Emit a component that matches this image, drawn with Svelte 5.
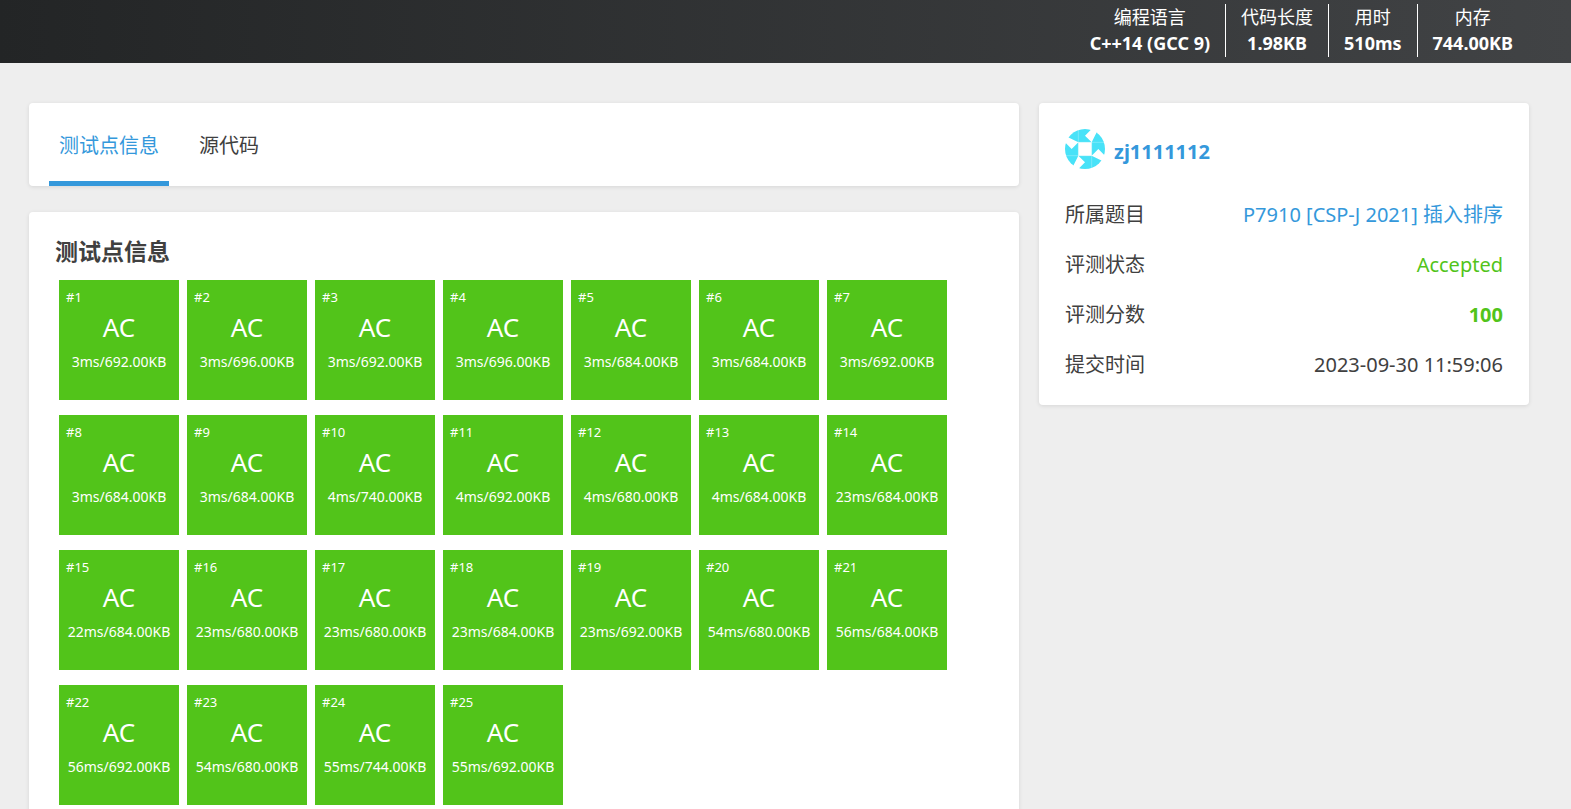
<script lang="ts">
	type Stat = { label: string; value: string };
	type TestCase = { id: number; time: string; memory: string };

	const stats: Stat[] = [
		{ label: "编程语言", value: "C++14 (GCC 9)" },
		{ label: "代码长度", value: "1.98KB" },
		{ label: "用时", value: "510ms" },
		{ label: "内存", value: "744.00KB" },
	];

	const tabs = ["测试点信息", "源代码"];
	let current = $state(0);

	const results: [number, number][] = [
		[3, 692], [3, 696], [3, 692], [3, 696], [3, 684], [3, 684], [3, 692],
		[3, 684], [3, 684], [4, 740], [4, 692], [4, 680], [4, 684], [23, 684],
		[22, 684], [23, 680], [23, 680], [23, 684], [23, 692], [54, 680], [56, 684],
		[56, 692], [54, 680], [55, 744], [55, 692],
	];

	const cases: TestCase[] = results.map(([time, memory], i) => ({
		id: i + 1,
		time: `${time}ms`,
		memory: `${memory.toFixed(2)}KB`,
	}));
</script>

<header>
	{#each stats as stat}
		<div class="stat">
			<span>{stat.label}</span>
			<strong>{stat.value}</strong>
		</div>
	{/each}
</header>

<div class="page">
	<main>
		<nav class="card tabs">
			{#each tabs as tab, i}
				<button class:active={current === i} onclick={() => (current = i)}>{tab}</button>
			{/each}
		</nav>

		<section class="card cases">
			<h2>测试点信息</h2>
			<div class="grid">
				{#each cases as item (item.id)}
					<div class="case">
						<div class="id">#{item.id}</div>
						<div class="status">AC</div>
						<div class="usage">{item.time}/{item.memory}</div>
					</div>
				{/each}
			</div>
		</section>
	</main>

	<aside class="card">
		<a class="user" href="#user">
			<svg viewBox="0 0 60 60" aria-hidden="true">
				<defs>
					<clipPath id="round"><circle cx="30" cy="30" r="30" /></clipPath>
					<path id="blade" d="M0 0H40L30 10L40 20H20L0 10Z" />
				</defs>
				<g clip-path="url(#round)" fill="#48e2f8">
					<use href="#blade" />
					<use href="#blade" transform="rotate(90 30 30)" />
					<use href="#blade" transform="rotate(180 30 30)" />
					<use href="#blade" transform="rotate(270 30 30)" />
				</g>
				<path d="M20 0V60M40 0V60M0 20H60M0 40H60" stroke="#fff" stroke-opacity="0.4" />
			</svg>
			<strong>zj1111112</strong>
		</a>
		<dl>
			<div>
				<dt>所属题目</dt>
				<dd><a href="#problem">P7910 [CSP-J 2021] 插入排序</a></dd>
			</div>
			<div>
				<dt>评测状态</dt>
				<dd class="ok">Accepted</dd>
			</div>
			<div>
				<dt>评测分数</dt>
				<dd class="ok score">100</dd>
			</div>
			<div>
				<dt>提交时间</dt>
				<dd>2023-09-30 11:59:06</dd>
			</div>
		</dl>
	</aside>
</div>

<style>
	:global(body) {
		margin: 0;
		background: #eee;
		color: #404040;
		font: 20px/30px "Noto Sans", "Noto Sans CJK SC", sans-serif;
	}

	header {
		display: flex;
		justify-content: flex-end;
		padding: 4px 43px 6px 29px;
		background: linear-gradient(to right, #232526, #414345);
		color: #fff;
		font-size: 18px;
		line-height: 26px;
	}

	.stat {
		display: flex;
		flex-direction: column;
		align-items: center;
		padding: 0 15px 1px;
	}

	.stat + .stat {
		border-left: 1px solid #fff;
	}

	.page {
		display: flex;
		align-items: flex-start;
		gap: 20px;
		padding: 40px 42px 40px 29px;
	}

	main {
		flex: 1;
		min-width: 0;
	}

	.card {
		background: #fff;
		border-radius: 4px;
		box-shadow: 0 1px 4px rgba(0, 0, 0, 0.1);
	}

	.tabs {
		display: flex;
		gap: 20px;
		padding: 0 20px;
		margin-bottom: 26px;
	}

	.tabs button {
		padding: 28px 10px 20px;
		border: none;
		border-bottom: 5px solid transparent;
		background: none;
		color: inherit;
		font: inherit;
		cursor: pointer;
	}

	.tabs .active {
		border-color: #3498db;
		color: #3498db;
	}

	.cases {
		padding: 24px 26px 40px;
	}

	h2 {
		margin: 0 0 14px;
		font-size: 23px;
		line-height: 30px;
	}

	.grid {
		display: flex;
		flex-wrap: wrap;
		gap: 15px 8px;
		padding: 0 4px;
	}

	.case {
		box-sizing: border-box;
		width: 120px;
		height: 120px;
		padding: 7px;
		background: #52c41a;
		color: #fff;
		text-align: center;
	}

	.id {
		font-size: 13px;
		line-height: 20px;
		text-align: left;
	}

	.status {
		font-size: 26px;
		line-height: 40px;
	}

	.usage {
		margin: 0 -7px;
		font-size: 14px;
		line-height: 30px;
	}

	aside {
		box-sizing: border-box;
		width: calc(100% / 3 - 10px);
		padding: 26px 26px 15px;
	}

	a {
		color: #3498db;
		text-decoration: none;
	}

	.user {
		display: flex;
		align-items: flex-start;
		gap: 9px;
		margin-bottom: 21px;
	}

	.user svg {
		width: 40px;
		height: 40px;
	}

	.user strong {
		padding-top: 8px;
	}

	dl {
		margin: 0;
	}

	dl div {
		display: flex;
		justify-content: space-between;
		padding: 10px 0;
	}

	dd {
		margin: 0;
	}

	.ok {
		color: #52c41a;
	}

	.score {
		font-weight: bold;
	}
</style>
